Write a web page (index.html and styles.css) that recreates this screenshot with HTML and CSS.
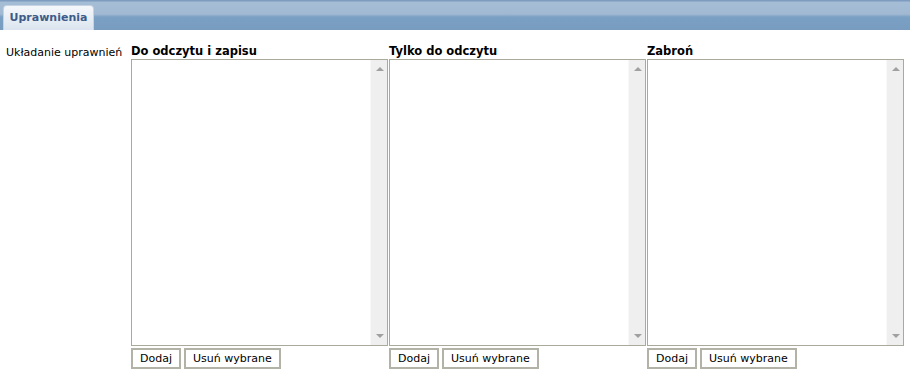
FILE: index.html
```html
<!DOCTYPE html>
<html>

<head>
    <link rel="stylesheet" href="styles.css">
</head>

<body>
    <div class="tabbar">
        <div class="tab">Uprawnienia</div>
    </div>

    <div class="panel">
        <div class="label">Układanie uprawnień</div>

        <div class="column">
            <div class="column-title">Do odczytu i zapisu</div>
            <div class="listbox">
                <div class="list-area"></div>
                <div class="scrollbar">
                    <span class="arrow up"></span>
                    <span class="arrow down"></span>
                </div>
            </div>
            <div class="buttons">
                <button>Dodaj</button>
                <button>Usuń wybrane</button>
            </div>
        </div>

        <div class="column">
            <div class="column-title">Tylko do odczytu</div>
            <div class="listbox">
                <div class="list-area"></div>
                <div class="scrollbar">
                    <span class="arrow up"></span>
                    <span class="arrow down"></span>
                </div>
            </div>
            <div class="buttons">
                <button>Dodaj</button>
                <button>Usuń wybrane</button>
            </div>
        </div>

        <div class="column">
            <div class="column-title">Zabroń</div>
            <div class="listbox">
                <div class="list-area"></div>
                <div class="scrollbar">
                    <span class="arrow up"></span>
                    <span class="arrow down"></span>
                </div>
            </div>
            <div class="buttons">
                <button>Dodaj</button>
                <button>Usuń wybrane</button>
            </div>
        </div>
    </div>
</body>

</html>
```

FILE: styles.css
```css
body {
    margin: 0;
    font-family: "DejaVu Sans", Verdana, sans-serif;
    font-size: 11px;
    color: #000;
    background-color: #fff;
}

/* Top bar with the tab */
.tabbar {
    height: 30px;
    padding-left: 3px;
    display: flex;
    align-items: flex-end;
    box-sizing: border-box;
    background: linear-gradient(#7d9cc0 0, #7d9cc0 1px, #a6bdd6 2px, #a2b9d3 14px, #7aa0c3 17px, #779cc0 100%);
}

.tab {
    width: 89px;
    height: 24px;
    line-height: 24px;
    text-align: center;
    font-weight: bold;
    color: #3d5b89;
    border: 1px solid #c5d3e4;
    border-bottom: none;
    border-radius: 4px 4px 0 0;
    background: linear-gradient(#f5f8fb, #dbe4ef);
}

/* Main content */
.panel {
    display: flex;
    padding: 14px 0 0 6px;
}

.label {
    width: 125px;
    padding-top: 2px;
}

.column {
    width: 258px;
}

.column-title {
    font-weight: bold;
    font-size: 11.5px;
    height: 15px;
    line-height: 14px;
}

.listbox {
    display: flex;
    width: 257px;
    height: 287px;
    box-sizing: border-box;
    border: 1px solid #a9a99c;
}

.list-area {
    flex: 1;
}

.scrollbar {
    width: 16px;
    background-color: #efefef;
    border-left: 1px solid #f8f8f8;
    position: relative;
}

.arrow {
    position: absolute;
    left: 5px;
    width: 0;
    height: 0;
    border-left: 4px solid transparent;
    border-right: 4px solid transparent;
}

.arrow.up {
    top: 7px;
    border-bottom: 4px solid #a0a0a0;
}

.arrow.down {
    bottom: 7px;
    border-top: 4px solid #a0a0a0;
}

.buttons {
    display: flex;
    gap: 3px;
    margin-top: 2px;
}

button {
    font-family: "DejaVu Sans", Verdana, sans-serif;
    font-size: 11px;
    height: 21px;
    padding: 0 7px;
    background-color: #fff;
    border: 2px solid #b2b2a6;
    border-radius: 0;
    color: #000;
    cursor: pointer;
}
```
